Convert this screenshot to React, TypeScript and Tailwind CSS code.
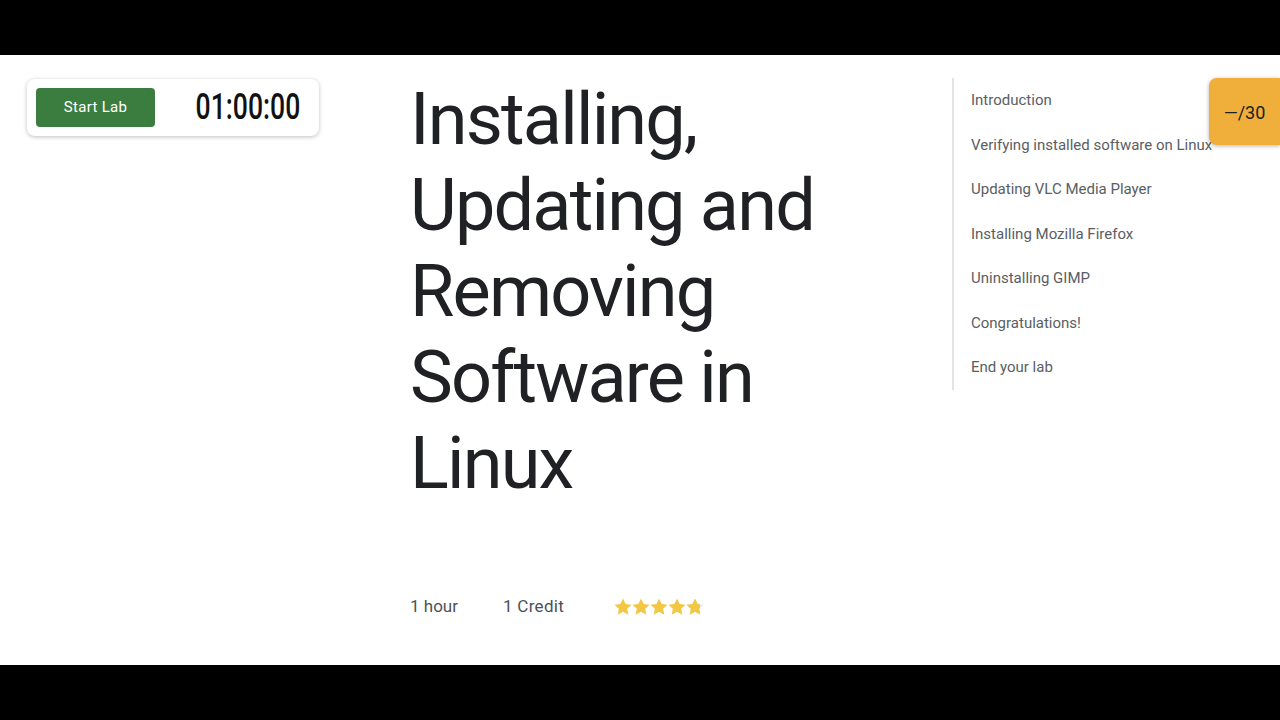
import React from "react";

const toc = [
  "Introduction",
  "Verifying installed software on Linux",
  "Updating VLC Media Player",
  "Installing Mozilla Firefox",
  "Uninstalling GIMP",
  "Congratulations!",
  "End your lab",
];

const starPath =
  "M12 2.5l2.9 6.1 6.6.8-4.9 4.6 1.3 6.6L12 17.3l-5.9 3.3 1.3-6.6-4.9-4.6 6.6-.8z";

function Star({ partial }: { partial?: boolean }) {
  return (
    <svg width="18" height="18" viewBox="2 2 20 20">
      <defs>
        <clipPath id="half">
          <rect x="0" y="0" width="17.5" height="24" />
        </clipPath>
      </defs>
      {partial ? (
        <>
          <path d={starPath} fill="#e8e8e8" />
          <path d={starPath} fill="#f2c744" clipPath="url(#half)" />
        </>
      ) : (
        <path d={starPath} fill="#f2c744" />
      )}
    </svg>
  );
}

export default function App() {
  return (
    <div className="w-[1280px] h-[720px] flex flex-col bg-black overflow-hidden" style={{ fontFamily: "Roboto, 'Open Sans', sans-serif" }}>
      <div className="h-[55px] bg-black" />
      <div className="h-[610px] bg-white relative flex">
        {/* left column */}
        <div className="w-[410px] pl-[27px] pt-[24px]">
          <div className="w-[292px] h-[57px] rounded-lg bg-white shadow-[0_1px_4px_rgba(0,0,0,0.25)] flex items-center pl-[9px]">
            <div className="w-[119px] h-[39px] rounded-[4px] bg-[#3b7d3f] flex items-center justify-center text-white text-[15px] font-normal tracking-[0.3px]">
              Start Lab
            </div>
            <div className="flex-1 flex justify-center pl-[22px]">
              <span className="inline-block text-[35px] leading-none font-medium text-[#111] scale-x-[0.76] scale-y-[1.04]">
                01:00:00
              </span>
            </div>
          </div>
        </div>
        {/* main column */}
        <div className="w-[542px] pt-[22px]">
          <h1 className="text-[72px] leading-[86px] text-[#202124] font-normal tracking-[-1.8px]">
            Installing,
            <br />
            Updating and
            <br />
            Removing
            <br />
            Software in
            <br />
            Linux
          </h1>
          <div className="mt-[88px] flex items-center h-[24px] text-[17px] text-[#4d5156]">
            <span>1 hour</span>
            <span className="ml-[45px] tracking-[0.3px]">1 Credit</span>
            <div className="ml-[50px] flex items-center">
              <Star />
              <Star />
              <Star />
              <Star />
              <Star partial />
            </div>
          </div>
        </div>
        {/* toc */}
        <div className="pt-[23px]">
          <div className="border-l-2 border-[#e3e3e3] pl-[17px]">
            {toc.map((t) => (
              <div key={t} className="h-[44.5px] flex items-center text-[15px] text-[#5a5e63] whitespace-nowrap">
                {t}
              </div>
            ))}
          </div>
        </div>
        {/* score badge */}
        <div className="absolute right-0 top-[23px] w-[71px] h-[67px] bg-[#f0ae3b] rounded-l-lg shadow-[0_1px_4px_rgba(0,0,0,0.3)] flex items-center justify-center text-[18px] text-[#202124] pt-[1px]">
          —/30
        </div>
      </div>
      <div className="h-[55px] bg-black" />
    </div>
  );
}
